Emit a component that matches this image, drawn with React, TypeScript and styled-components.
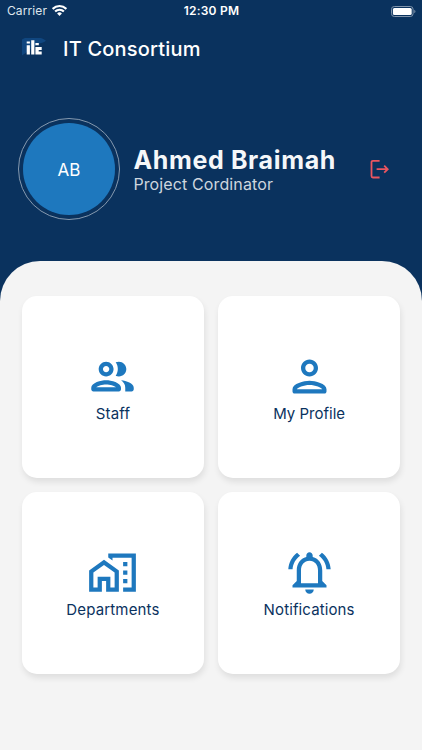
import React from "react";
import styled, { createGlobalStyle } from "styled-components";

const GlobalStyle = createGlobalStyle`
  *, *::before, *::after { box-sizing: border-box; }
  body {
    margin: 0;
    background: #0a325e;
    font-family: Inter, Roboto, sans-serif;
  }
`;

const Screen = styled.div`
  display: flex;
  flex-direction: column;
  width: 422px;
  height: 750px;
  overflow: hidden;
  background: #0a325e;
  color: #fff;
`;

const Label = styled.span<{ $size: number; $weight?: number; $spacing?: number; $color?: string }>`
  display: block;
  white-space: nowrap;
  font-size: ${(p) => p.$size}px;
  line-height: 1.2;
  font-weight: ${(p) => p.$weight ?? 400};
  letter-spacing: ${(p) => p.$spacing ?? 0}px;
  color: ${(p) => p.$color ?? "#fff"};
`;

const StatusBar = styled.div`
  display: grid;
  grid-template-columns: 1fr auto 1fr;
  align-items: center;
  height: 22px;
  padding: 0 6px 0 7px;
`;

const Carrier = styled.div`
  display: flex;
  align-items: center;
  gap: 4.5px;
`;

const BatterySlot = styled.div`
  display: flex;
  justify-content: flex-end;
`;

const AppBar = styled.header`
  display: flex;
  align-items: center;
  gap: 15px;
  height: 54px;
  padding-left: 21px;
`;

const Profile = styled.section`
  display: flex;
  align-items: center;
  height: 185px;
  padding: 0 32px 0 18px;
`;

const AvatarRing = styled.div`
  display: grid;
  place-items: center;
  width: 102px;
  height: 102px;
  border: 1px solid #8599af;
  border-radius: 50%;
`;

const Avatar = styled.div`
  display: grid;
  place-items: center;
  width: 92px;
  height: 92px;
  padding-top: 3px;
  border-radius: 50%;
  background: #1e78be;
`;

const Identity = styled.div`
  flex: 1;
  display: flex;
  flex-direction: column;
  padding: 2px 0 0 13.4px;
`;

const LogoutButton = styled.button`
  display: flex;
  padding: 0;
  margin: 1px 0 0;
  border: 0;
  background: none;
`;

const Sheet = styled.main`
  flex: 1;
  display: grid;
  grid-template-columns: repeat(2, 182.3px);
  grid-auto-rows: 182.5px;
  gap: 13.5px 13.9px;
  padding: 34.5px 21.8px;
  border-radius: 40px 40px 0 0;
  background: #f4f4f4;
`;

const Tile = styled.div`
  display: flex;
  flex-direction: column;
  align-items: center;
  padding-top: 55px;
  border-radius: 15px;
  background: #fff;
  box-shadow: 1px 4px 6px rgba(0, 0, 0, 0.09);
`;

const TileIcon = styled.svg`
  width: 51px;
  height: 51px;
  margin-bottom: 3px;
  fill: #1e78be;
`;

const tiles = [
  {
    name: "Staff",
    spacing: 0.15,
    path: "M9 13.75c-2.34 0-7 1.17-7 3.5V18c0 .55.45 1 1 1h12c.55 0 1-.45 1-1v-.75c0-2.33-4.66-3.5-7-3.5zM4.34 17c.84-.58 2.87-1.25 4.66-1.25s3.82.67 4.66 1.25H4.34zM9 12c1.93 0 3.5-1.57 3.5-3.5S10.93 5 9 5 5.5 6.57 5.5 8.5 7.07 12 9 12zm0-5c.83 0 1.5.67 1.5 1.5S9.83 10 9 10s-1.5-.67-1.5-1.5S8.17 7 9 7zm7.04 6.81c1.16.84 1.96 1.96 1.96 3.44V19h3c.55 0 1-.45 1-1v-.75c0-2.02-3.5-3.17-5.96-3.44zM15 12c1.93 0 3.5-1.57 3.5-3.5S16.93 5 15 5c-.54 0-1.04.13-1.5.35.63.89 1 1.98 1 3.15s-.37 2.26-1 3.15c.46.22.96.35 1.5.35z",
  },
  {
    name: "My Profile",
    spacing: 0,
    path: "M12 6c1.1 0 2 .9 2 2s-.9 2-2 2-2-.9-2-2 .9-2 2-2m0 10c2.7 0 5.8 1.29 6 2H6c.23-.72 3.31-2 6-2m0-12C9.79 4 8 5.79 8 8s1.79 4 4 4 4-1.79 4-4-1.79-4-4-4zm0 10c-2.67 0-8 1.34-8 4v1c0 .55.45 1 1 1h14c.55 0 1-.45 1-1v-1c0-2.66-5.33-4-8-4z",
  },
  {
    name: "Departments",
    spacing: 0.15,
    path: "M1 11v10h6v-5h2v5h6V11L8 6l-7 5zm12 8h-2v-5H5v5H3v-7l5-3.5 5 3.5v7zM10 3v1.97l2 1.43V5h9v14h-4v2h6V3H10zM17 7h2v2h-2zM17 11h2v2h-2zM17 15h2v2h-2z",
  },
  {
    name: "Notifications",
    spacing: 0.12,
    path: "M12 22c1.1 0 2-.9 2-2h-4c0 1.1.9 2 2 2zm6-6v-5c0-3.07-1.63-5.64-4.5-6.32V4c0-.83-.67-1.5-1.5-1.5s-1.5.67-1.5 1.5v.68C7.64 5.36 6 7.92 6 11v5l-2 2v1h16v-1l-2-2zm-2 1H8v-6c0-2.48 1.51-4.5 4-4.5s4 2.02 4 4.5v6zM7.58 4.08L6.15 2.65C3.75 4.48 2.17 7.3 2.03 10.5h2c.15-2.65 1.51-4.97 3.55-6.42zm12.39 6.42h2c-.15-3.2-1.73-6.02-4.12-7.85l-1.42 1.43c2.02 1.45 3.39 3.77 3.54 6.42z",
  },
];

const WifiIcon = () => (
  <svg width="15" height="11" viewBox="0 0 15 11" fill="none" stroke="#fff" strokeWidth="2.1">
    <path d="M0.6 3.9a9.8 9.8 0 0 1 13.8 0" />
    <path d="M3.1 6.6a6.2 6.2 0 0 1 8.8 0" />
    <path d="M7.5 10.9 5.1 8.5a3.4 3.4 0 0 1 4.800 0z" fill="#fff" stroke="none" />
  </svg>
);

const BatteryIcon = () => (
  <svg width="25" height="11" viewBox="0 0 25 11">
    <rect x="0.5" y="0.5" width="21.6" height="10" rx="2.8" fill="none" stroke="#8094ab" />
    <rect x="1.9" y="1.9" width="18.8" height="7.2" rx="1.5" fill="#fff" />
    <path d="M23.3 3.8c1.5.5 1.5 2.9 0 3.4z" fill="#8094ab" />
  </svg>
);

const Logo = () => (
  <svg width="27" height="22" viewBox="0 0 27 22">
    <path d="M1 17.500V1.500C6-2.300 20-2 25 2.800 22.500 4.800 20 5 17 6L6 14 1 17.500z" fill="#10467f" />
    <path
      d="M5.7 3.6h3.2v2H5.700zM5.7 7.200h3.2v9.400H5.700zM10.200 2.300h3.200v14.300h-3.200zM14.400 4.900h3.400v2.400h-3.400zM14.400 9h6.300v3h-3v1.500h3v3.100h-6.300z"
      fill="#fff"
    />
  </svg>
);

const LogoutIcon = () => (
  <svg width="21" height="21" viewBox="0 0 21 21" fill="none" stroke="#ea5660" strokeWidth="1.8">
    <path d="M10.6 1.9H3.900Q2.500 1.900 2.500 3.300V17.100Q2.500 18.500 3.900 18.500H10.600" />
    <path d="M7.6 10.2H18.800M15.200 6.700 18.700 10.200 15.200 13.700" />
  </svg>
);

export default function App() {
  return (
    <>
      <GlobalStyle />
      <Screen>
        <StatusBar>
          <Carrier>
            <Label $size={12} $spacing={0.1} $color="#dfe6ed">Carrier</Label>
            <WifiIcon />
          </Carrier>
          <Label $size={12} $weight={600} $spacing={0.2}>12:30 PM</Label>
          <BatterySlot>
            <BatteryIcon />
          </BatterySlot>
        </StatusBar>
        <AppBar>
          <Logo />
          <Label $size={20} $weight={500} $spacing={0.2}>IT Consortium</Label>
        </AppBar>
        <Profile>
          <AvatarRing>
            <Avatar>
              <Label $size={17}>AB</Label>
            </Avatar>
          </AvatarRing>
          <Identity>
            <Label $size={25} $weight={700} $spacing={0.65} $color="#f5f7f9">Ahmed Braimah</Label>
            <Label $size={16} $spacing={0.12} $color="#ced6df">Project Cordinator</Label>
          </Identity>
          <LogoutButton aria-label="Log out">
            <LogoutIcon />
          </LogoutButton>
        </Profile>
        <Sheet>
          {tiles.map((tile) => (
            <Tile key={tile.name}>
              <TileIcon viewBox="0 0 24 24">
                <path d={tile.path} />
              </TileIcon>
              <Label $size={15} $spacing={tile.spacing} $color="#0a325e">{tile.name}</Label>
            </Tile>
          ))}
        </Sheet>
      </Screen>
    </>
  );
}
